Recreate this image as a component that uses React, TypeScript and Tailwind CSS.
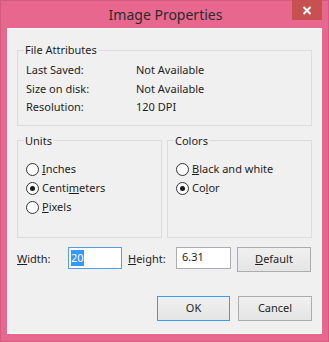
import React from "react";

const font = { fontFamily: '"Segoe UI", "Noto Sans", "Open Sans", sans-serif' };

function Radio({ checked, children }: { checked?: boolean; children: React.ReactNode }) {
  return (
    <div className="flex items-center h-[19px]">
      <span className="w-[13px] h-[13px] rounded-full border border-[#333333] bg-white flex items-center justify-center shrink-0">
        {checked && <span className="w-[5px] h-[5px] rounded-full bg-[#1a1a1a]" />}
      </span>
      <span className="ml-[3px]">{children}</span>
    </div>
  );
}

function Btn({ children, primary, className = "" }: { children: React.ReactNode; primary?: boolean; className?: string }) {
  return (
    <button
      className={`h-[25px] border bg-gradient-to-b from-[#f0f0f0] to-[#e5e5e5] text-[11px] text-[#1e1e1e] ${
        primary ? "border-[#3c9bed]" : "border-[#acacac]"
      } ${className}`}
    >
      {children}
    </button>
  );
}

export default function App() {
  return (
    <div
      className="w-[329px] h-[342px] bg-[#e8678f] border border-[#d45a80] flex flex-col text-[11px] text-[#1e1e1e]"
      style={font}
    >
      <div className="h-[27px] flex items-start relative">
        <div className="flex-1 text-center text-[14px] leading-[27px] text-[#2b2b2b] pl-[2px]">Image Properties</div>
        <div className="absolute right-[6px] top-[-1px] w-[30px] h-[20px] bg-[#c75050] flex items-center justify-center text-white">
          <svg width="10" height="9" viewBox="0 0 10 9">
            <path d="M1.5 1 L8.5 8 M8.5 1 L1.5 8" stroke="white" strokeWidth="2" />
          </svg>
        </div>
      </div>
      <div className="mx-[6px] flex-1 mb-[7px] bg-[#f0f0f0] border border-[#f7fbfb] px-[9px] pt-[13px] flex flex-col">
        <fieldset className="border border-[#dcdcdc] px-[8px] pt-[3px] pb-[8px] mx-[0px]">
          <legend className="px-[1px] ml-[-2px] leading-[16px]">File Attributes</legend>
          <div className="grid grid-cols-[110px_1fr] leading-[18.5px]">
            <span>Last Saved:</span>
            <span>Not Available</span>
            <span>Size on disk:</span>
            <span>Not Available</span>
            <span>Resolution:</span>
            <span>120 DPI</span>
          </div>
        </fieldset>
        <div className="flex gap-[5px] mt-[7px]">
          <fieldset className="flex-1 border border-[#dcdcdc] px-[8px] pt-[11px] pb-[20px]">
            <legend className="px-[1px] ml-[-2px] leading-[16px]">Units</legend>
            <Radio>
              <u>I</u>nches
            </Radio>
            <Radio checked>
              Centi<u>m</u>eters
            </Radio>
            <Radio>
              <u>P</u>ixels
            </Radio>
          </fieldset>
          <fieldset className="flex-1 border border-[#dcdcdc] px-[8px] pt-[11px] pb-[20px]">
            <legend className="px-[1px] ml-[-2px] leading-[16px]">Colors</legend>
            <Radio>
              <u>B</u>lack and white
            </Radio>
            <Radio checked>
              Co<u>l</u>or
            </Radio>
          </fieldset>
        </div>
        <div className="flex items-start mt-[9px] h-[25px]">
          <span className="w-[51px] leading-[23px]">
            <u>W</u>idth:
          </span>
          <div className="w-[54px] h-[22px] border border-[#569de5] bg-white flex items-center pl-[2px]">
            <span className="bg-[#3399ff] text-white leading-[16px]">20</span>
          </div>
          <span className="ml-[6px] w-[48px] leading-[23px]">
            <u>H</u>eight:
          </span>
          <div className="w-[55px] h-[22px] border border-[#abadb3] bg-white flex items-center pl-[5px]">6.31</div>
          <Btn className="ml-[6px] w-[74px]">
            <u>D</u>efault
          </Btn>
        </div>
        <div className="flex justify-end gap-[8px] mt-[24px]">
          <Btn primary className="w-[73px]">OK</Btn>
          <Btn className="w-[74px]">Cancel</Btn>
        </div>
      </div>
    </div>
  );
}
